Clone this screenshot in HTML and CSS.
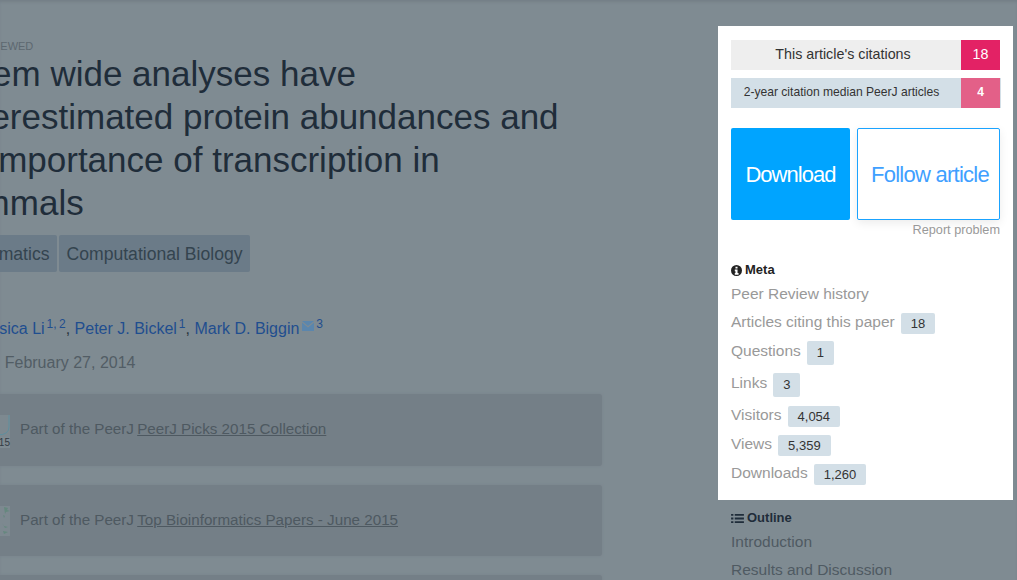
FILE: index.html
```html
<!DOCTYPE html>
<html>
    <head>
        <meta charset="UTF-8">
        <meta name="viewport" content="width=device-width, initial-scale=1.0">
        <title>PeerJ article</title>
        <link rel="stylesheet" href="styles.css">
    </head>
    <body>
        <div class="page">
            <div class="article">
                <div class="kicker">PEER-REVIEWED</div>
                <h1><span class="first-line">System wide analyses have</span><br>underestimated protein abundances and<br>the importance of transcription in<br>mammals</h1>
                <div class="tags">
                    <span class="tag">Bioinformatics</span>
                    <span class="tag">Computational Biology</span>
                </div>
                <div class="authors">
                    <a href="#">Jingyi Jessica Li</a><sup>1,&#8201;2</sup>, <a href="#">Peter J. Bickel</a><sup>1</sup>, <a href="#">Mark D. Biggin</a><svg class="mail" viewBox="0 0 12 10" width="12" height="10"><path d="M0 0h12L6 5z"/><path d="M0 1.500V10h12V1.500L6 6.500z"/></svg><sup>3</sup>
                </div>
                <div class="date">Published February 27, 2014</div>
                <div class="collection">
                    <div class="thumb">
                        <svg viewBox="0 0 30 30" width="30" height="30"><path d="M6 0v12q0 8 11.500 8t11.500-8V0" fill="none" stroke="#5e8f9e" stroke-width="1"/></svg>
                        <span class="thumb-year">2015</span>
                    </div>
                    <p>Part of the PeerJ <a href="#">PeerJ Picks 2015 Collection</a></p>
                </div>
                <div class="collection collection-short">
                    <div class="thumb thumb-tree">
                        <svg viewBox="0 0 30 30" width="30" height="30"><path d="M24 1l4 1-1 2 3 1-4 1-1 2zM23 9l2 1-1 2zM22 17l2 3 4 1-3 1zM23 25l5 1-4 2z" fill="#65887e"/></svg>
                    </div>
                    <p>Part of the PeerJ <a href="#">Top Bioinformatics Papers - June 2015</a></p>
                </div>
                <div class="collection"></div>
            </div>
            <div class="side">
                <div class="panel">
                    <div class="stat">
                        <span class="stat-label">This article's citations</span>
                        <span class="stat-num">18</span>
                    </div>
                    <div class="stat stat-median">
                        <span class="stat-label">2-year citation median PeerJ articles</span>
                        <span class="stat-num">4</span>
                    </div>
                    <div class="actions">
                        <a class="btn btn-download" href="#">Download</a>
                        <a class="btn btn-follow" href="#">Follow article</a>
                    </div>
                    <div class="report"><a href="#">Report problem</a></div>
                    <h5>
                        <svg viewBox="0 0 16 16" width="11" height="11"><path fill-rule="evenodd" d="M8 0a8 8 0 1 0 0 16A8 8 0 0 0 8 0zM6.500 2.500h3v2.500h-3zM5.500 6.500h4v5h1.500v2.500H5.500v-2.500h1v-2.500h-1z"/></svg>
                        Meta
                    </h5>
                    <ul class="meta">
                        <li class="m-history"><a href="#">Peer Review history</a></li>
                        <li><a href="#">Articles citing this paper</a><span class="count">18</span></li>
                        <li><a href="#">Questions</a><span class="count count-tall">1</span></li>
                        <li class="m-links"><a href="#">Links</a><span class="count count-tall">3</span></li>
                        <li><a href="#">Visitors</a><span class="count">4,054</span></li>
                        <li><a href="#">Views</a><span class="count">5,359</span></li>
                        <li><a href="#">Downloads</a><span class="count">1,260</span></li>
                    </ul>
                </div>
                <div class="outline">
                    <h5>
                        <svg viewBox="0 0 14 12" width="13" height="11"><path d="M0 1h2.500v2H0zM4 1h10v2H4zM0 5h2.500v2H0zM4 5h10v2H4zM0 9h2.500v2H0zM4 9h10v2H4z"/></svg>
                        Outline
                    </h5>
                    <a href="#">Introduction</a>
                    <a href="#">Results and Discussion</a>
                </div>
            </div>
        </div>
    </body>
</html>
```

FILE: styles.css
```css
html, body {
    margin: 0;
    padding: 0;
    height: 100%;
    overflow: hidden;
}
body {
    background-color: #7f8b92;
    box-shadow: inset 0 3px 3px -1px #747f87;
    font-family: "Liberation Sans", Arial, sans-serif;
    color: #1f2d3a;
}
a {
    text-decoration: none;
}
.page {
    display: flex;
    height: 580px;
    overflow: hidden;
}

/* left column, its start is cut off by the window */
.article {
    flex: none;
    width: 670px;
    margin-left: -68px;
    padding-top: 40px;
}
.kicker {
    margin-left: 9px;
    font-size: 11px;
    line-height: 13px;
    color: #5d6870;
}
h1 {
    margin: 0;
    margin-top: -1px;
    font-size: 35px;
    font-weight: normal;
    line-height: 43px;
    color: #1f2d3a;
    white-space: nowrap;
}
.first-line {
    margin-left: -8px;
}
.tags {
    display: flex;
    gap: 2px;
    margin-top: 11px;
    margin-left: -1px;
}
.tag {
    padding: 0 7px 0 8px;
    height: 37px;
    line-height: 38px;
    font-size: 17.6px;
    color: #34444f;
    background-color: #6b7b88;
    border-radius: 2px;
}
.authors {
    margin-top: 47px;
    margin-left: -3px;
    height: 20px;
    line-height: 20px;
    font-size: 16px;
    color: #2b3640;
    white-space: nowrap;
}
.authors a {
    color: #1f4e8f;
}
.authors sup {
    font-size: 12px;
    line-height: 0;
    margin-left: 2px;
    color: #1f4e8f;
}
.mail {
    margin-left: 3px;
    vertical-align: 3px;
    fill: #5b86ad;
}
.date {
    margin-top: 14px;
    margin-left: -2px;
    height: 20px;
    line-height: 20px;
    font-size: 16px;
    color: #525d65;
}
.collection {
    display: flex;
    align-items: center;
    height: 72px;
    margin-top: 19px;
    padding-left: 48px;
    background-color: #747f87;
    border-radius: 3px;
    box-shadow: 0 0 3px #78838b;
}
.collection-short {
    height: 71px;
}
.date + .collection {
    margin-top: 21px;
}
.thumb {
    flex: none;
    position: relative;
    width: 30px;
    height: 30px;
    margin-right: 10px;
    background-color: #7d8990;
}
.thumb-year {
    position: absolute;
    right: 0;
    bottom: -3px;
    font-size: 10px;
    line-height: 11px;
    color: #333c44;
    background-color: #7f8b92;
}
.collection p {
    margin: 0 0 3px;
    font-size: 15.2px;
    color: #4e5961;
    white-space: nowrap;
}
.collection a {
    margin-left: -1px;
    color: #4e5961;
    text-decoration: underline;
}

/* right column */
.side {
    flex: none;
    width: 295px;
    margin-left: 116px;
    padding-top: 26px;
}
.panel {
    box-sizing: border-box;
    height: 474px;
    padding: 14px 13px 0;
    background-color: #fff;
}
.stat {
    display: flex;
    height: 30px;
    width: 269px;
    margin-bottom: 8px;
    background-color: #eee;
    font-size: 14.3px;
    line-height: 29px;
    color: #333;
}
.stat-label {
    flex: 1;
    padding-right: 6px;
    text-align: center;
}
.stat-num {
    flex: none;
    width: 39px;
    text-align: center;
    color: #fff;
    background-color: #e32265;
}
.stat-median {
    width: 270px;
    background-color: #d3dfe7;
    font-size: 12.1px;
}
.stat-median .stat-num {
    margin-right: 1px;
    background-color: #e36088;
    font-weight: bold;
}
.stat-median .stat-label {
    padding-right: 9px;
}
.actions {
    display: flex;
    gap: 7px;
    margin-top: 20px;
    width: 269px;
}
.btn {
    box-sizing: border-box;
    height: 92px;
    line-height: 93px;
    font-size: 22px;
    text-align: center;
    border-radius: 2px;
}
.btn-download {
    width: 119px;
    letter-spacing: -0.95px;
    color: #fff;
    background-color: #00a4ff;
}
.btn-follow {
    width: 143px;
    padding-left: 3px;
    letter-spacing: -0.75px;
    line-height: 92px;
    color: #3fa0ff;
    background-color: #fff;
    border: 1px solid #1aa3ff;
    box-shadow: 0 3px 10px rgba(0, 0, 0, 0.08);
}
.report {
    width: 269px;
    margin-top: 3px;
    line-height: 15px;
    font-size: 12.7px;
    text-align: right;
}
.report a {
    color: #999;
}
h5 {
    display: flex;
    align-items: center;
    gap: 3px;
    margin: 0;
    font-size: 13px;
    line-height: 16px;
}
.panel h5 {
    margin: 24px 0 2px;
    color: #222;
}
.panel h5 svg {
    fill: #222;
}
.meta {
    list-style: none;
    margin: 0;
    padding: 0;
}
.meta li {
    display: flex;
    align-items: center;
    height: 29px;
    font-size: 15.5px;
}
.meta a {
    color: #999;
}
.meta .m-history {
    height: 27px;
}
.meta .m-links {
    height: 35px;
}
.count {
    box-sizing: border-box;
    height: 21px;
    margin: 3px 0 0 6px;
    padding: 0 10px;
    line-height: 21px;
    font-size: 13px;
    color: #333;
    background-color: #d3dfe7;
    border-radius: 2px;
}
.count-tall {
    height: 24px;
    margin-top: 4px;
    line-height: 24px;
}
.outline {
    padding: 10px 0 0 13px;
}
.outline h5 {
    margin-bottom: 2px;
    color: #1f2d3a;
}
.outline h5 svg {
    fill: #1f2d3a;
}
.outline a {
    display: block;
    height: 28px;
    line-height: 28px;
    font-size: 15.5px;
    color: #4f5a62;
}
```
